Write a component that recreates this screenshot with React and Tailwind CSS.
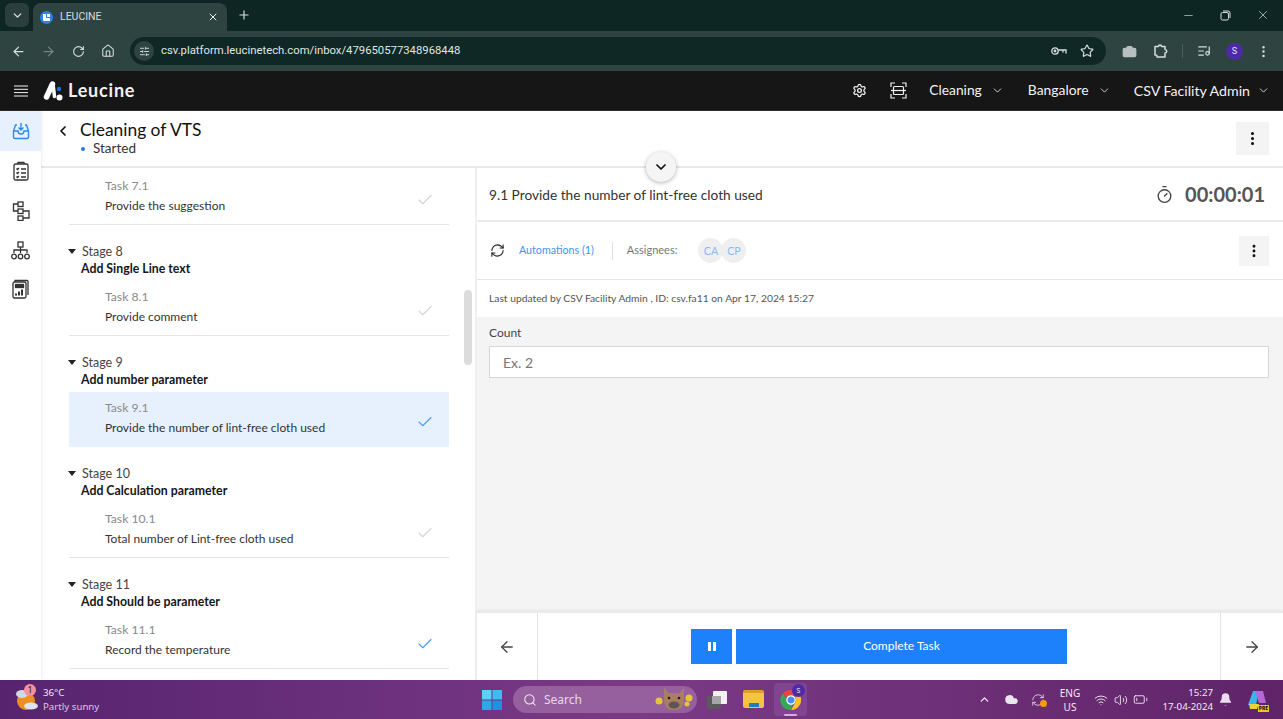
import { ChevronDown, ChevronLeft, ChevronUp, ArrowLeft, ArrowRight, RotateCw, Home, Plus, X, Minus, Star, Camera, ListMusic, MoreVertical, Settings, SlidersHorizontal, Check, Search, RefreshCw, Timer, Wifi, Volume2, BatteryLow, Bell, Cloud } from 'lucide-react'

const stages = [
  { stage: 'Stage 8', name: 'Add Single Line text', task: 'Task 8.1', text: 'Provide comment' },
  { stage: 'Stage 9', name: 'Add number parameter', task: 'Task 9.1', text: 'Provide the number of lint-free cloth used', active: true },
  { stage: 'Stage 10', name: 'Add Calculation parameter', task: 'Task 10.1', text: 'Total number of Lint-free cloth used' },
  { stage: 'Stage 11', name: 'Add Should be parameter', task: 'Task 11.1', text: 'Record the temperature', done: true },
]

function TaskRow({ task, text, active, done }) {
  return (
    <div className={`h-[55px] flex items-center justify-between pl-[36px] pr-[15px] pb-[3px] border-b ${active ? 'bg-[#e7f1fd] border-transparent' : 'border-[#e4e4e4]'}`}>
      <div>
        <div className="text-[12.2px] leading-[18px] text-[#8a8a8a]">{task}</div>
        <div className="text-[12px] leading-[18px] mt-[2px] text-[#333]">{text}</div>
      </div>
      <Check size={18} strokeWidth={1.5} className={`mt-[8px] ${active || done ? 'text-[#4b9cf5]' : 'text-[#d4d4d4]'}`} />
    </div>
  )
}

function StageBlock({ stage, name, task, text, active, done }) {
  return (
    <div>
      <div className="h-[56px] pt-[18px]">
        <div className="flex items-center text-[12.5px] leading-[17px] text-[#444]">
          <span className="w-0 h-0 -ml-[1px] border-x-[4px] border-x-transparent border-t-[5px] border-t-[#222] mr-[6px]" />
          <span>{stage}</span>
        </div>
        <div className="text-[12.3px] leading-[17px] font-bold text-[#161616] pl-[12px]">{name}</div>
      </div>
      <TaskRow task={task} text={text} active={active} done={done} />
    </div>
  )
}

function WindowsLogo() {
  return (
    <svg width="20" height="20" viewBox="0 0 20 20">
      <rect x="0" y="0" width="9.5" height="9.5" fill="#5fd0f5" />
      <rect x="10.5" y="0" width="9.5" height="9.5" fill="#3dbcf0" />
      <rect x="0" y="10.5" width="9.5" height="9.5" fill="#2aa8ea" />
      <rect x="10.5" y="10.5" width="9.5" height="9.5" fill="#1b93e0" />
    </svg>
  )
}

function ChromeLogo() {
  return (
    <svg width="22" height="22" viewBox="0 0 22 22">
      <path d="M11 1a10 10 0 0 1 8.700 5H11a5 5 0 0 0-4.600 3L3 4.200A10 10 0 0 1 11 1z" fill="#e8453c" />
      <path d="M19.700 6A10 10 0 0 1 11 21l4.300-7.500A5 5 0 0 0 15.200 8z" fill="#fbc02d" />
      <path d="M11 21A10 10 0 0 1 3 4.200l4 7a5 5 0 0 0 6 3.500z" fill="#3aa757" />
      <circle cx="11" cy="11" r="4.200" fill="#4c8bf5" stroke="#fff" strokeWidth="1.200" />
    </svg>
  )
}

function LeucineMark() {
  return (
    <svg width="20" height="20" viewBox="0 0 20 20">
      <path d="M9.500 3 L3.500 16" stroke="#fff" strokeWidth="5.500" strokeLinecap="round" />
      <path d="M10 3 L11.500 15.500" stroke="#fff" strokeWidth="3.500" strokeLinecap="round" />
      <circle cx="16.500" cy="16.500" r="3" fill="#fff" />
      <circle cx="16" cy="8" r="2.200" fill="#1d6fe8" />
    </svg>
  )
}

function WeatherIcon() {
  return (
    <div className="relative w-[24px] h-[24px]">
      <svg width="24" height="24" viewBox="0 0 24 24">
        <circle cx="11" cy="13" r="9" fill="#ef8f1d" />
        <ellipse cx="7" cy="6" rx="6" ry="4" fill="#cfd9e8" />
        <ellipse cx="16" cy="18" rx="7" ry="3.500" fill="#dbe4f1" />
      </svg>
      <span className="absolute -top-[4px] left-[9px] w-[12px] h-[12px] rounded-full bg-[#f78f9a] text-[#222] text-[9px] leading-[12px] text-center">1</span>
    </div>
  )
}

function Bear() {
  return (
    <svg width="40" height="26" viewBox="0 0 40 26">
      <circle cx="5" cy="15" r="3.500" fill="#e6c33c" />
      <circle cx="35" cy="12" r="3.500" fill="#e6c33c" />
      <circle cx="33" cy="18" r="2.500" fill="#e6c33c" />
      <path d="M10 1 L14 7 L26 7 L30 1 L30 14 Q30 24 20 24 Q10 24 10 14z" fill="#a97e62" />
      <ellipse cx="20" cy="19" rx="5.500" ry="3.500" fill="#5d5556" />
      <circle cx="15" cy="12" r="1.300" fill="#2a1a15" />
      <circle cx="25" cy="12" r="1.300" fill="#2a1a15" />
    </svg>
  )
}

function CopilotIcon() {
  return (
    <div className="relative w-[20px] h-[20px]">
      <svg width="20" height="20" viewBox="0 0 20 20">
        <path d="M6 1h6l-3 14H1z" fill="#38b6e8" />
        <path d="M8 1h8l3 12h-7z" fill="#b36ad6" />
        <path d="M2 14h10l-2 5H3z" fill="#e9d23a" />
      </svg>
      <span className="absolute -bottom-[2px] right-[-2px] bg-[#e8c52e] text-black text-[5px] font-bold leading-[7px] px-[1px]">PRE</span>
    </div>
  )
}

export default function App() {
  return (
    <div className="w-[1283px] h-[719px] overflow-hidden flex flex-col relative bg-white font-['Lato',sans-serif]">
      {/* Browser tabs */}
      <div className="h-[31px] bg-[#0e2623] flex items-end pl-[5px] font-['Roboto',sans-serif] text-[#d6dedc]">
        <div className="w-[24px] h-[24px] mb-[4px] rounded-md bg-[#2a3f3c] flex items-center justify-center">
          <ChevronDown size={13} strokeWidth={2.5} />
        </div>
        <div className="ml-[4px] w-[194px] h-[28px] bg-[#2d4440] rounded-t-lg flex items-center pl-[7px] pr-[8px]">
          <span className="w-[13px] h-[13px] rounded-full bg-[#2f80ed] flex items-center justify-center">
            <svg width="7" height="7" viewBox="0 0 7 7" fill="#fff"><path d="M0 0h3v4h4v3H1a1 1 0 0 1-1-1z" /><path d="M4 0h3v3H4z" /></svg>
          </span>
          <span className="ml-[7px] text-[10.5px] flex-1">LEUCINE</span>
          <X size={12} strokeWidth={2} className="text-[#eef2f1]" />
        </div>
        <Plus size={14} strokeWidth={2} className="ml-[10px] mb-[9px]" />
        <div className="ml-auto flex items-center gap-[25px] mr-[13px] mb-[9px]">
          <Minus size={13} strokeWidth={1.2} />
          <svg width="11" height="11" viewBox="0 0 11 11" fill="none" stroke="currentColor"><rect x="1" y="2.500" width="7.500" height="7.500" rx="1.500" /><path d="M3 1h5a2 2 0 0 1 2 2v5" /></svg>
          <X size={14} strokeWidth={1.2} />
        </div>
      </div>
      {/* Browser toolbar */}
      <div className="h-[40px] bg-[#2d4440] flex items-center pl-[11px] pr-[11px] text-[#d6dedc] font-['Roboto',sans-serif]">
        <ArrowLeft size={15} strokeWidth={2} />
        <ArrowRight size={15} strokeWidth={2} className="ml-[15px] text-[#748480]" />
        <RotateCw size={13} strokeWidth={2} className="ml-[16px]" />
        <Home size={14} strokeWidth={1.8} className="ml-[16px]" />
        <div className="ml-[15px] w-[976px] h-[28px] rounded-full bg-[#102825] flex items-center pl-[4px] pr-[12px]">
          <span className="w-[20px] h-[20px] rounded-full bg-[#2d4440] flex items-center justify-center">
            <SlidersHorizontal size={11} strokeWidth={2} />
          </span>
          <span className="ml-[7px] text-[11.3px] text-[#dfe6e4]">csv.platform.leucinetech.com/inbox/479650577348968448</span>
          <svg className="ml-auto" width="16" height="10" viewBox="0 0 16 10" fill="none" stroke="currentColor" strokeWidth="1.300"><circle cx="4" cy="5" r="3.200" /><circle cx="4" cy="5" r="0.800" /><path d="M7.200 4H15v3.500M12 4v2.500" /></svg>
          <Star size={14} strokeWidth={2} className="ml-[13px]" />
        </div>
        <Camera size={15} strokeWidth={2} className="ml-[16px] text-[#b8c0be] fill-[#b8c0be]" />
        <svg className="ml-[16px]" width="15" height="15" viewBox="0 0 15 15" fill="none" stroke="currentColor" strokeWidth="1.500" strokeLinejoin="round"><path d="M2 2.500h3.500a1.500 1.500 0 0 1 3 0H12v3a1.500 1.500 0 0 1 0 3.500v4H4v-.5a1.500 1.500 0 0 0-2-1.500z" /></svg>
        <span className="w-px h-[14px] bg-[#4a5f5c] ml-[14px]" />
        <ListMusic size={14} strokeWidth={2} className="ml-[14px]" />
        <span className="ml-[15px] w-[17px] h-[17px] rounded-full bg-[#4f2aa8] text-[9px] leading-[17px] text-center text-[#e8e0fa]">S</span>
        <MoreVertical size={15} strokeWidth={2} className="ml-[13px]" />
      </div>
      {/* App nav */}
      <div className="h-[40px] bg-[#161616] border-b border-[#2c2c2c] flex items-center pl-[14px] pr-[13px] text-[#f2f2f2]">
        <svg width="14" height="12" viewBox="0 0 14 12" stroke="currentColor" strokeWidth="1"><path d="M0 1h14M0 4.300h14M0 7.600h14M0 11h14" /></svg>
        <div className="ml-[15px]"><LeucineMark /></div>
        <span className="ml-[5px] text-[18px] font-bold tracking-[0.8px]">Leucine</span>
        <Settings size={15} strokeWidth={2} className="ml-auto" />
        <svg className="ml-[23px]" width="17" height="17" viewBox="0 0 17 17" fill="none" stroke="currentColor" strokeWidth="1.200"><path d="M1 5V1h4M12 1h4v4M1 12v4h4M16 12v4h-4" /><rect x="3.500" y="4.500" width="10" height="8" rx="1" /><path d="M1 8.500h15" /></svg>
        <span className="ml-[22px] text-[13.8px]">Cleaning</span>
        <ChevronDown size={13} strokeWidth={1.5} className="ml-[9px]" />
        <span className="ml-[24px] text-[13.9px]">Bangalore</span>
        <ChevronDown size={13} strokeWidth={1.5} className="ml-[9px]" />
        <span className="ml-[23px] text-[14.2px]">CSV Facility Admin</span>
        <ChevronDown size={13} strokeWidth={1.5} className="ml-[7px]" />
      </div>

      <div className="flex-1 min-h-0 flex relative">
        {/* Side rail */}
        <div className="w-[41px] shrink-0 shadow-[1px_0_3px_rgba(0,0,0,0.08)] z-10 bg-white flex flex-col items-center text-[#333]">
          <div className="w-full h-[40px] bg-[#e7f1fd] flex items-center justify-center">
            <svg width="18" height="18" viewBox="0 0 18 18" fill="none" stroke="#2f88f0" strokeWidth="1.400"><path d="M9 1v7M6.500 5.500 9 8l2.500-2.500M5 3H3.500L1.500 9v6a1.500 1.500 0 0 0 1.500 1.500h12a1.500 1.500 0 0 0 1.500-1.500V9l-2-6H13M1.500 9H6a3 3 0 0 0 6 0h4.500" /></svg>
          </div>
          <svg className="mt-[10px]" width="18" height="20" viewBox="0 0 18 20" fill="none" stroke="#333" strokeWidth="1.300"><rect x="2" y="3" width="14" height="16" rx="1.500" /><path d="M6 3V1.500h6V3M4.500 7.500 5.500 8.500 7 7M9 8h5M4.500 11.500l1 1L7 11M9 12h5M4.500 15.500l1 1L7 15M9 16h5" /></svg>
          <svg className="mt-[20px]" width="20" height="20" viewBox="0 0 20 20" fill="none" stroke="#333" strokeWidth="1.300"><rect x="7" y="1" width="5" height="4.500" /><rect x="7" y="8" width="5" height="4.500" /><rect x="7" y="15" width="5" height="4.500" /><path d="M7 3H2.500v7H7M12 10h6v7h-6" /></svg>
          <svg className="mt-[20px]" width="19" height="19" viewBox="0 0 19 19" fill="none" stroke="#333" strokeWidth="1.300"><rect x="7" y="1" width="5" height="5" /><path d="M9.500 6v6M3 12V9h13v3" /><circle cx="3" cy="15.500" r="2.300" /><circle cx="9.500" cy="15.500" r="2.300" /><circle cx="16" cy="15.500" r="2.300" /></svg>
          <svg className="mt-[19px]" width="17" height="20" viewBox="0 0 17 20" fill="none" stroke="#333" strokeWidth="1.300"><rect x="1" y="3" width="13" height="16" rx="1.500" /><path d="M3 3V1.500h12a1 1 0 0 1 1 1V16" /><rect x="3.500" y="5.500" width="8" height="3" fill="#333" /><path d="M4 16.500v-2M7 16.500v-4M10 16.500v-6" strokeWidth="2" /></svg>
        </div>

        <div className="flex-1 min-w-0 flex flex-col">
          {/* Job header */}
          <div className="h-[57px] shrink-0 border-b-2 border-[#e8e8e8] flex items-start pl-[14px] pr-[14px]">
            <ChevronLeft size={16} strokeWidth={2.6} className="mt-[12px] text-[#111]" />
            <div className="ml-[9px] mt-[8px]">
              <div className="text-[17.4px] leading-[22px] text-[#111]">Cleaning of VTS</div>
              <div className="flex items-center text-[13.5px] leading-[15px] text-[#333]">
                <span className="w-[4px] h-[4px] rounded-full bg-[#1f7cf0] ml-[1px] mr-[8px]" />Started
              </div>
            </div>
            <button className="ml-auto mt-[11px] w-[33px] h-[33px] bg-[#f4f4f4] flex items-center justify-center">
              <MoreVertical size={17} strokeWidth={2.4} className="text-[#111]" />
            </button>
          </div>

          <div className="flex-1 min-h-0 flex">
            {/* Task list */}
            <div className="w-[434px] shrink-0 flex overflow-hidden">
              <div className="w-[380px] ml-[28px] mt-[2px] shrink-0">
                <TaskRow task="Task 7.1" text="Provide the suggestion" />
                {stages.map((s) => <StageBlock key={s.stage} {...s} />)}
              </div>
              <div className="ml-[15px] w-[8px]">
                <div className="mt-[122px] h-[75px] w-[8px] rounded-full bg-[#dcdcdc]" />
              </div>
            </div>
            {/* Task panel */}
            <div className="flex-1 min-w-0 flex flex-col border-l-2 border-[#f0f0f0]">
              <div className="h-[54px] shrink-0 border-b-2 border-[#ececec] flex items-center pl-[12px] pr-[18px]">
                <span className="mt-[2px] text-[13.7px] text-[#333]">9.1 Provide the number of lint-free cloth used</span>
                <Timer size={19} strokeWidth={1.7} className="ml-auto text-[#444]" />
                <span className="ml-[11px] text-[20px] font-bold text-[#555]">00:00:01</span>
              </div>
              <div className="h-[58px] shrink-0 border-b border-[#e4e4e4] flex items-center pl-[13px] pr-[14px]">
                <RefreshCw size={15} strokeWidth={1.7} className="text-[#222]" />
                <span className="ml-[14px] text-[10.7px] text-[#3f93f5]">Automations (1)</span>
                <span className="ml-[18px] w-px h-[18px] bg-[#e0e0e0]" />
                <span className="ml-[14px] text-[11px] text-[#777]">Assignees:</span>
                <span className="ml-[21px] w-[25px] h-[25px] rounded-full bg-[#efefef] text-[10.7px] leading-[25px] text-center text-[#8ab8f0]">CA</span>
                <span className="ml-[-2px] w-[25px] h-[25px] rounded-full bg-[#efefef] text-[10.7px] leading-[25px] text-center text-[#8ab8f0]">CP</span>
                <button className="ml-auto w-[30px] h-[30px] bg-[#f4f4f4] flex items-center justify-center">
                  <MoreVertical size={16} strokeWidth={2.4} className="text-[#111]" />
                </button>
              </div>
              <div className="h-[37px] shrink-0 flex items-center pl-[12px] text-[10.3px] text-[#555]">
                Last updated by CSV Facility Admin , ID: csv.fa11 on Apr 17, 2024 15:27
              </div>
              <div className="flex-1 min-h-0 bg-[#f4f4f4] pl-[12px] pt-[8px] pr-[14px]">
                <div className="text-[12px] leading-[16px] text-[#444]">Count</div>
                <div className="mt-[5px] h-[32px] bg-white border border-[#d6d6d6] flex items-center pl-[13px] text-[14px] text-[#777]">Ex. 2</div>
              </div>
              <div className="h-[69px] shrink-0 bg-white border-t-2 border-[#eaeaea] flex items-center shadow-[0_-1px_3px_rgba(0,0,0,0.06)]">
                <div className="w-[61px] h-full border-r border-[#e4e4e4] flex items-center justify-center">
                  <ArrowLeft size={18} strokeWidth={1.7} className="text-[#444]" />
                </div>
                <div className="flex-1 flex justify-center gap-[4px]">
                  <button className="w-[41px] h-[35px] bg-[#1d81fc] flex items-center justify-center gap-[2px]">
                    <span className="w-[3px] h-[9px] bg-white" />
                    <span className="w-[3px] h-[9px] bg-white" />
                  </button>
                  <button className="w-[331px] h-[35px] pb-[1px] bg-[#1d81fc] text-white text-[12px]">Complete Task</button>
                </div>
                <div className="w-[63px] h-full border-l border-[#e4e4e4] flex items-center justify-center">
                  <ArrowRight size={18} strokeWidth={1.7} className="text-[#444]" />
                </div>
              </div>
            </div>
          </div>
        </div>

        {/* Collapse toggle */}
        <div className="absolute left-[646px] top-[41px] w-[30px] h-[30px] rounded-full bg-[#f5f5f5] shadow-[0_1px_4px_rgba(0,0,0,0.3)] flex items-center justify-center z-20">
          <ChevronDown size={16} strokeWidth={2.6} className="text-[#111]" />
        </div>
      </div>

      {/* Windows taskbar */}
      <div className="h-[39px] shrink-0 bg-gradient-to-r from-[#57236f] via-[#7b3a86] to-[#5f2468] flex items-center relative font-['Noto_Sans',sans-serif] text-[#f3eaf5]">
        <div className="ml-[15px]"><WeatherIcon /></div>
        <div className="ml-[4px] text-[9.7px] leading-[14px]">
          <div>36°C</div>
          <div className="text-[#dcc9e2]">Partly sunny</div>
        </div>
        <div className="absolute left-[482px] top-[10px]"><WindowsLogo /></div>
        <div className="absolute left-[513px] top-[6px] w-[184px] h-[27px] rounded-full bg-[#96609f] flex items-center pl-[10px]">
          <Search size={14} strokeWidth={1.8} />
          <span className="ml-[7px] text-[12px] text-[#e6d8ea]">Search</span>
          <span className="absolute right-[3px] top-[0px]"><Bear /></span>
        </div>
        <div className="absolute left-[707px] top-[11px] w-[20px] h-[18px]">
          <span className="absolute left-0 top-[5px] w-[14px] h-[13px] bg-[#5a5a5a] rounded-[1px]" />
          <span className="absolute left-[6px] top-0 w-[14px] h-[13px] bg-[#f1f1f1] rounded-[1px]" />
          <span className="absolute left-[5px] top-[5px] w-[9px] h-[8px] bg-[#a6a6a6]" />
        </div>
        <div className="absolute left-[743px] top-[10px] w-[21px] h-[18px] rounded-[2px] bg-[#f5c542] border-t-[3px] border-[#e0a020]">
          <span className="absolute left-[6px] bottom-[1px] w-[10px] h-[4px] bg-[#1c7ccf]" />
        </div>
        <div className="absolute left-[774px] top-[3px] w-[33px] h-[33px] rounded-[4px] bg-[#7f4590] flex items-center justify-center">
          <ChromeLogo />
          <span className="absolute left-[18px] top-[1px] w-[13px] h-[13px] rounded-full bg-[#4f2aa8] text-[7px] leading-[13px] text-center">S</span>
          <span className="absolute left-[10px] bottom-0 w-[13px] h-[2px] rounded-full bg-[#e3a8ea]" />
        </div>
        <div className="absolute left-[978px] top-0 h-full flex items-center">
          <ChevronUp size={13} strokeWidth={2.4} />
          <Cloud size={15} strokeWidth={0} className="ml-[13px] fill-[#e8e8ee]" />
          <div className="ml-[12px] relative">
            <RefreshCw size={14} strokeWidth={1.3} />
            <span className="absolute right-[-2px] bottom-[0px] w-[7px] h-[7px] rounded-full bg-[#f59a12]" />
          </div>
          <div className="ml-[14px] w-[22px] text-center text-[10px] leading-[14px]">ENG<br />US</div>
          <Wifi size={14} strokeWidth={1.6} className="ml-[13px]" />
          <Volume2 size={14} strokeWidth={1.5} className="ml-[6px]" />
          <BatteryLow size={15} strokeWidth={1.4} className="ml-[5px]" />
          <div className="ml-[13px] w-[52px] text-right text-[9.7px] leading-[14px]"><div>15:27</div><div className="whitespace-nowrap">17-04-2024</div></div>
          <Bell size={15} strokeWidth={0} className="ml-[5px] fill-[#ecdcf0]" />
          <div className="ml-[14px]"><CopilotIcon /></div>
        </div>
      </div>
    </div>
  )
}
